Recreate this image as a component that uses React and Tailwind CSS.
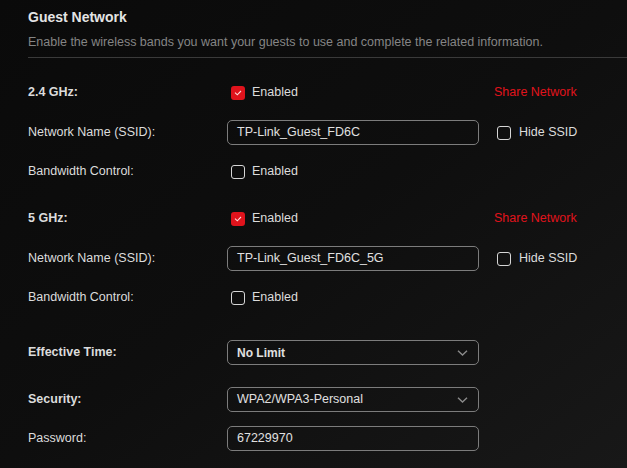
import { useState } from 'react'

const font = { fontFamily: '"Liberation Sans", Arial, sans-serif' }

function Check({ checked, onChange }) {
  return (
    <button
      type="button"
      onClick={onChange}
      className={
        'w-[14px] h-[14px] rounded-[3px] flex items-center justify-center shrink-0 ' +
        (checked ? 'bg-[#e0131c]' : 'border-[1.5px] border-[#d6d6d6]')
      }
    >
      {checked && (
        <svg width="8" height="6" viewBox="0 0 8 6" fill="none">
          <path d="M1 2.6 L3.3 4.8 L7 1" stroke="#ffd9d9" strokeWidth="1.1" />
        </svg>
      )}
    </button>
  )
}

function Row({ label, bold, children, right, className = '' }) {
  return (
    <div className={'flex items-center h-[25px] ' + className}>
      <div className={'w-[199px] text-[12.5px] text-[#dcdcdc] ' + (bold ? 'font-bold' : '')}>{label}</div>
      <div className="w-[252px] flex items-center">{children}</div>
      {right}
    </div>
  )
}

function Field({ value }) {
  return (
    <div className="w-[252px] h-[25px] border border-[#7c7c7c] rounded-[5px] flex items-center px-[9px]">
      <span className="text-[12.5px] text-[#e0e0e0]">{value}</span>
    </div>
  )
}

function Select({ value, bold }) {
  return (
    <div className="w-[252px] h-[25px] border border-[#7c7c7c] rounded-[5px] flex items-center justify-between pl-[9px] pr-[10px]">
      <span className={'text-[#e0e0e0] ' + (bold ? 'text-[12px] font-bold' : 'text-[12.5px]')}>{value}</span>
      <svg width="11" height="6" viewBox="0 0 11 6" fill="none">
        <path d="M1 0.8 L5.5 5 L10 0.8" stroke="#8a8a8a" strokeWidth="1.4" />
      </svg>
    </div>
  )
}

function Enabled({ checked, onChange }) {
  return (
    <div className="flex items-center gap-[7px] pl-[4px]">
      <Check checked={checked} onChange={onChange} />
      <span className="text-[12.5px] text-[#dcdcdc]">Enabled</span>
    </div>
  )
}

function Band({ name, ssid, first }) {
  const [on, setOn] = useState(true)
  const [bw, setBw] = useState(false)
  const [hide, setHide] = useState(false)
  return (
    <div>
      <Row
        label={name}
        bold
        className={first ? 'mt-[22px]' : 'mt-[22px]'}
        right={<span className="ml-[15px] text-[12.5px] text-[#e0131c]">Share Network</span>}
      >
        <Enabled checked={on} onChange={() => setOn(!on)} />
      </Row>
      <Row
        label="Network Name (SSID):"
        className="mt-[15px]"
        right={
          <div className="ml-[18px] flex items-center gap-[8px]">
            <Check checked={hide} onChange={() => setHide(!hide)} />
            <span className="text-[12.5px] text-[#dcdcdc]">Hide SSID</span>
          </div>
        }
      >
        <Field value={ssid} />
      </Row>
      <Row label="Bandwidth Control:" className="mt-[14px]">
        <Enabled checked={bw} onChange={() => setBw(!bw)} />
      </Row>
    </div>
  )
}

export default function App() {
  return (
    <main
      style={font}
      className="w-[627px] h-[468px] overflow-hidden bg-gradient-to-br from-[#0a0a0a] via-[#0e0e0e] to-[#181818] pl-[28px] pt-[7px]"
    >
      <h1 className="text-[14px] font-bold text-[#e4e4e4] leading-[20px]">Guest Network</h1>
      <p className="mt-[6px] text-[12.5px] text-[#858585] leading-[18px]">
        Enable the wireless bands you want your guests to use and complete the related information.
      </p>
      <div className="mt-[6px] border-t border-[#3a3a3a]" />

      <Band name="2.4 GHz:" ssid="TP-Link_Guest_FD6C" first />
      <Band name="5 GHz:" ssid="TP-Link_Guest_FD6C_5G" />

      <Row label="Effective Time:" bold className="mt-[30px]">
        <Select value="No Limit" bold />
      </Row>
      <Row label="Security:" bold className="mt-[22px]">
        <Select value="WPA2/WPA3-Personal" />
      </Row>
      <Row label="Password:" className="mt-[14px]">
        <Field value="67229970" />
      </Row>
    </main>
  )
}
